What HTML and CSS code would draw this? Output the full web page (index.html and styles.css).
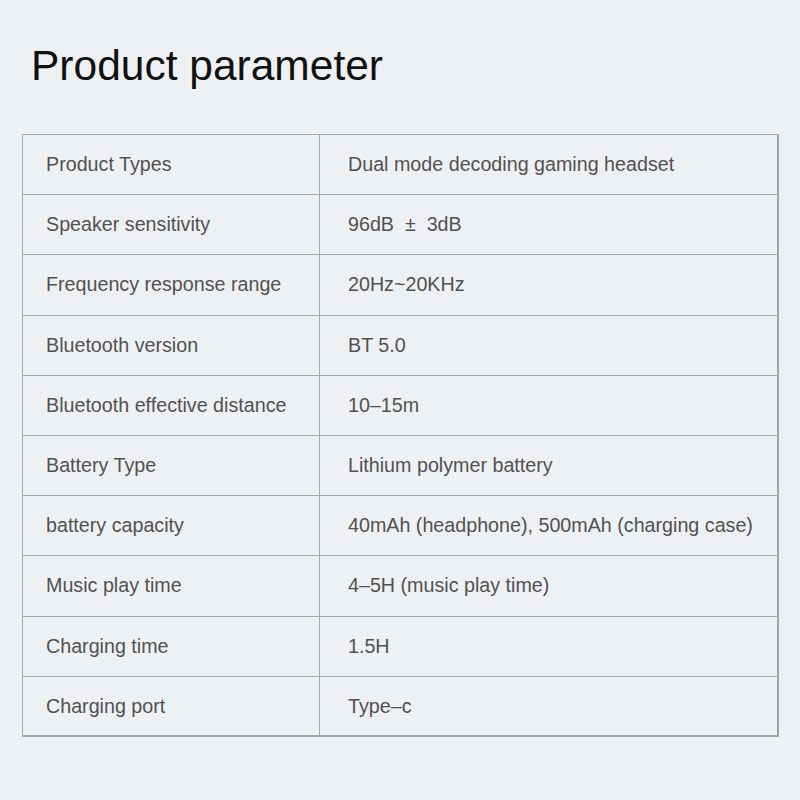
FILE: index.html
```html
<!DOCTYPE html>
<html>
<head>
<meta charset="utf-8">
<link rel="stylesheet" href="styles.css">
</head>
<body>
<div class="page">
  <h1 class="title">Product parameter</h1>
  <table class="params">
    <tr><td class="k">Product Types</td><td class="v">Dual mode decoding gaming headset</td></tr>
    <tr><td class="k">Speaker sensitivity</td><td class="v">96dB &nbsp;±&nbsp; 3dB</td></tr>
    <tr><td class="k">Frequency response range</td><td class="v">20Hz~20KHz</td></tr>
    <tr><td class="k">Bluetooth version</td><td class="v">BT 5.0</td></tr>
    <tr><td class="k">Bluetooth effective distance</td><td class="v">10–15m</td></tr>
    <tr><td class="k">Battery Type</td><td class="v">Lithium polymer battery</td></tr>
    <tr><td class="k">battery capacity</td><td class="v">40mAh (headphone), 500mAh (charging case)</td></tr>
    <tr><td class="k">Music play time</td><td class="v">4–5H (music play time)</td></tr>
    <tr><td class="k">Charging time</td><td class="v">1.5H</td></tr>
    <tr><td class="k">Charging port</td><td class="v">Type–c</td></tr>
  </table>
</div>
</body>
</html>
```
FILE: styles.css
```css
html, body {
  margin: 0;
  padding: 0;
  background: #eef1f4;
}
.page {
  width: 800px;
  height: 800px;
  padding: 42px 0 0 22px;
  box-sizing: border-box;
  font-family: "Liberation Sans", Arial, sans-serif;
}
.title {
  margin: 0 0 44px 9px;
  font-size: 42.5px;
  line-height: 48px;
  font-weight: normal;
  color: #111;
}
.params {
  border-collapse: collapse;
  width: 757px;
  border-right: 2px solid #a2a5a8;
  border-bottom: 2px solid #a2a5a8;
}
.params tr {
  height: 60.2px;
}
.params td {
  border: 1px solid #a6a9ac;
  padding: 0;
  font-size: 19.7px;
  color: #515151;
  vertical-align: middle;
}
.params td.k {
  width: 297px;
  padding-left: 23px;
  box-sizing: border-box;
}
.params td.v {
  padding-left: 28px;
}
```
